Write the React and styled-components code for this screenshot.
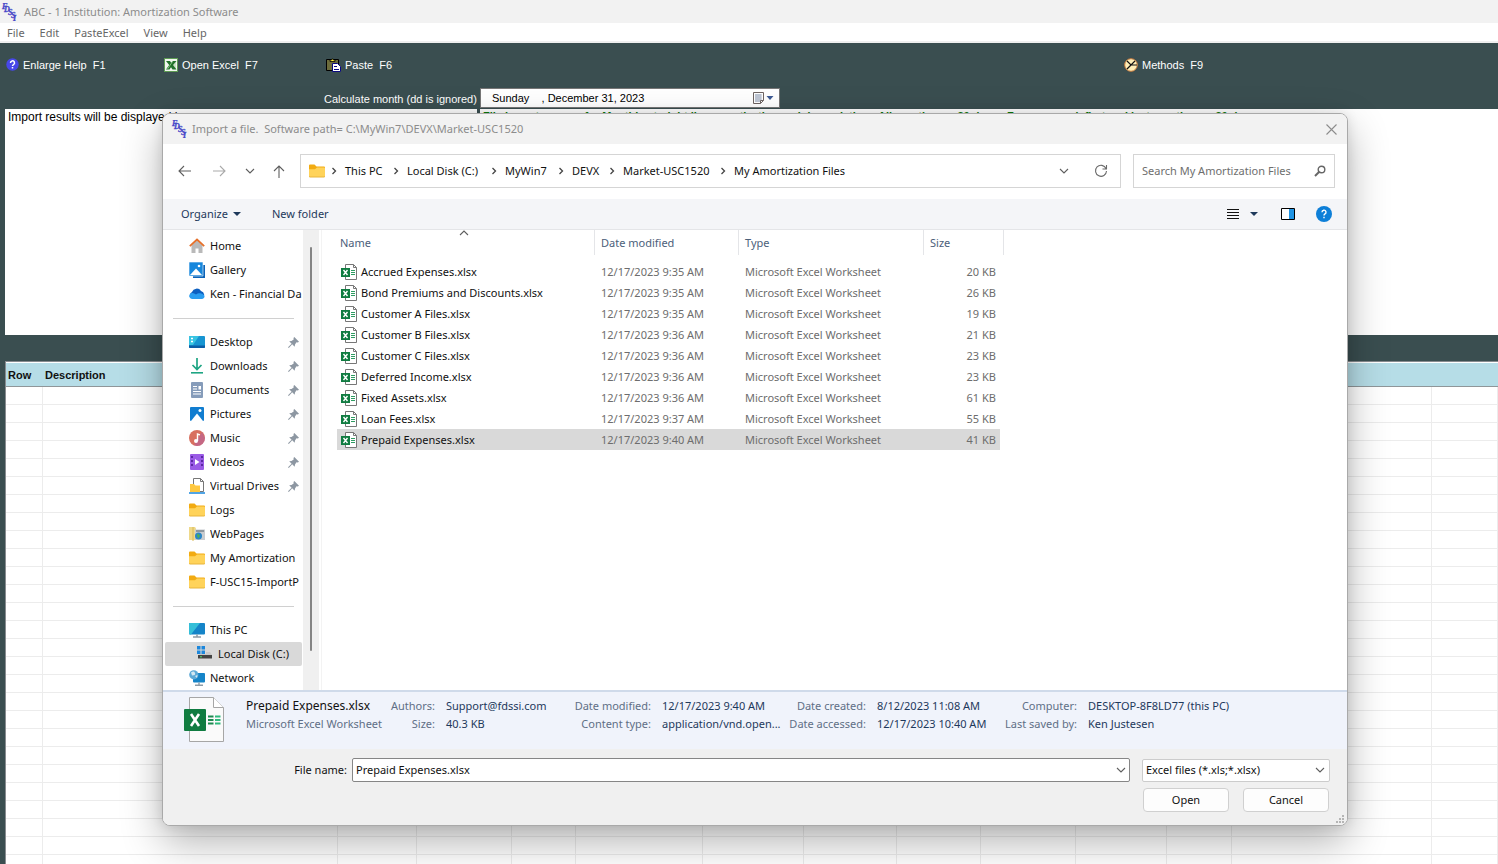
import React from "react";
import styled, { createGlobalStyle, css } from "styled-components";

const UI = `"Noto Sans", "Open Sans", sans-serif`;
const CLASSIC = `"Liberation Sans", Arial, sans-serif`;

const Global = createGlobalStyle`
  *, *::before, *::after { box-sizing: border-box; }
  body { margin: 0; background: #3a4e50; font: 11px/16px ${UI}; color: #111; }
  button, input, select { font: inherit; color: inherit; margin: 0; }
  button { padding: 0; border: 0; background: none; }
  svg { display: block; flex: none; }
  ul, dl, dd { margin: 0; padding: 0; list-style: none; }
`;

/* ---------- main window ---------- */
const Window = styled.main`
  position: relative;
  display: flex;
  flex-direction: column;
  height: 100vh;
  overflow: hidden;
`;
const TitleBar = styled.header`
  display: flex;
  align-items: center;
  gap: 7px;
  height: 23px;
  flex: none;
  padding-left: 1px;
  background: #f2f2f2;
  color: #8c8c8c;
`;
const MenuBar = styled.nav`
  display: flex;
  align-items: flex-end;
  gap: 15px;
  height: 20px;
  flex: none;
  padding-left: 7px;
  background: #fff;
  border-bottom: 2px solid #efefef;
  color: #666;
`;
const MenuItem = styled.button`
  height: 16px;
`;
const ToolBar = styled.div`
  display: grid;
  grid-template-columns: 158px 162px 798px 1fr;
  align-items: center;
  height: 43px;
  flex: none;
  padding-left: 6px;
  color: #fff;
  font: 11px/16px ${CLASSIC};
`;
const ToolButton = styled.button`
  display: flex;
  align-items: center;
  gap: 4px;
  white-space: pre;
`;
const DateRow = styled.div`
  display: flex;
  align-items: center;
  gap: 3px;
  height: 20px;
  flex: none;
  margin-top: 2px;
  padding-left: 324px;
  color: #fff;
  font: 11px/16px ${CLASSIC};
`;
const DateLabel = styled.label`
  width: 153px;
  padding-top: 2px;
  white-space: nowrap;
`;
const DatePicker = styled.div`
  display: flex;
  align-items: center;
  width: 300px;
  height: 20px;
  padding-right: 4px;
  background: #fff;
  border: 1px solid #777;
  color: #000;
`;
const DateInput = styled.input`
  flex: 1;
  min-width: 0;
  padding: 0 11px;
  border: 0;
  background: none;
  outline: 0;
`;
const Panels = styled.div`
  display: flex;
  gap: 3px;
  height: 226px;
  flex: none;
  margin-top: 1px;
  padding-left: 5px;
`;
const Panel = styled.p`
  width: ${(p) => (p.$wide ? "auto" : "472px")};
  flex: ${(p) => (p.$wide ? "1" : "none")};
  margin: 0;
  padding: 0 3px;
  background: #fff;
  color: ${(p) => (p.$wide ? "#0a7a0a" : "#000")};
  font: ${(p) => (p.$wide ? "bold 11px/14px" : "12px/16px")} ${CLASSIC};
  white-space: pre;
  overflow: hidden;
`;
const GridWrap = styled.section`
  flex: 1;
  min-height: 0;
  margin: 26px 0 0 5px;
  overflow: hidden;
  background: #fff;
  border-top: 1px solid #888c90;
  border-left: 1px solid #888c90;
`;
const Grid = styled.table`
  width: 100%;
  table-layout: fixed;
  border-spacing: 0;
  margin-top: 1px;
  font: bold 11px/16px ${CLASSIC};
  th {
    height: 24px;
    padding: 0 0 0 2px;
    text-align: left;
    background: #b6dde7;
    border-bottom: 1px solid #8f9699;
  }
  td {
    height: 18px;
    padding: 0;
    border-right: 1px solid #ececec;
    border-bottom: 1px solid #ececec;
  }
`;

/* ---------- dialog ---------- */
const Dialog = styled.section`
  position: absolute;
  top: 113px;
  left: 162px;
  right: 150px;
  display: flex;
  flex-direction: column;
  overflow: hidden;
  background: #fff;
  border: 1px solid #a9a9a9;
  border-radius: 8px;
  box-shadow: 0 16px 40px rgba(0, 0, 0, 0.3), 0 0 12px rgba(0, 0, 0, 0.1);
`;
const DialogTitle = styled.header`
  display: flex;
  align-items: center;
  gap: 5px;
  height: 30px;
  padding: 0 10px 0 8px;
  background: #f2f2f2;
  color: #8c8c8c;
  white-space: pre;
`;
const Spacer = styled.span`
  flex: 1;
`;
const NavBar = styled.div`
  display: flex;
  align-items: center;
  gap: 6px;
  height: 55px;
  padding: 0 12px 1px 9px;
`;
const IconButton = styled.button`
  display: flex;
  align-items: center;
  justify-content: center;
  width: ${(p) => p.$w || 24}px;
  height: 24px;
`;
const AddressBar = styled.div`
  display: flex;
  align-items: center;
  flex: 1;
  min-width: 0;
  height: 34px;
  margin-right: 6px;
  padding: 0 7px 0 8px;
  border: 1px solid #d5d5d5;
  white-space: nowrap;
`;
const Crumb = styled.button`
  width: ${(p) => p.$w}px;
  text-align: left;
  white-space: nowrap;
`;
const CrumbSep = styled.span`
  display: flex;
  justify-content: center;
  width: 20px;
  padding-right: 2px;
`;
const SearchBox = styled.label`
  display: flex;
  align-items: center;
  width: 202px;
  height: 34px;
  padding: 0 8px;
  border: 1px solid #d5d5d5;
`;
const SearchInput = styled.input`
  flex: 1;
  min-width: 0;
  padding: 0;
  border: 0;
  outline: 0;
  background: none;
  &::placeholder { color: #6e6e6e; opacity: 1; }
`;
const CommandBar = styled.div`
  display: flex;
  align-items: center;
  height: 31px;
  padding: 0 15px 0 18px;
  background: #f4f5f8;
  border-bottom: 1px solid #e4e5e8;
  color: #1e395b;
`;
const Command = styled.button`
  display: flex;
  align-items: center;
  gap: 5px;
  margin-right: ${(p) => p.$after || 0}px;
`;
const Browser = styled.div`
  display: flex;
  height: 460px;
`;
const Sidebar = styled.nav`
  display: flex;
  width: 159px;
  flex: none;
  border-right: 1px solid #f3f3f3;
`;
const Tree = styled.ul`
  width: 140px;
  padding: 4px 1px 0 2px;
`;
const TreeItem = styled.button`
  display: flex;
  align-items: center;
  gap: 5px;
  width: 100%;
  height: 24px;
  padding-left: ${(p) => (p.$nested ? 32 : 24)}px;
  border-radius: 2px;
  background: ${(p) => (p.$nested ? "#d9d9d9" : "transparent")};
  white-space: nowrap;
`;
const TreeText = styled.span`
  flex: 1;
  min-width: 0;
  overflow: hidden;
  text-align: left;
`;
const PinBox = styled.span`
  padding-right: 3px;
`;
const TreeGap = styled.li`
  height: 24px;
  margin: 0 8px;
  background: linear-gradient(#d0d0d0, #d0d0d0) 0 12px / 100% 1px no-repeat;
`;
const ScrollTrack = styled.div`
  width: 16px;
  padding: 17px 6px 39px 7px;
  background: #f0f0f0;
`;
const ScrollThumb = styled.div`
  height: 100%;
  width: 2px;
  border-radius: 1px;
  background: #858585;
`;
const FileTable = styled.table`
  align-self: flex-start;
  width: 667px;
  margin-left: 15px;
  table-layout: fixed;
  border-spacing: 0;
  th {
    position: relative;
    height: 25px;
    padding: 0 6px;
    border-right: 1px solid #e4e5e8;
    color: #4c607a;
    font-weight: 400;
    text-align: left;
  }
  th:first-child { padding-left: 3px; }
  thead::after { content: ""; display: block; height: 6px; }
`;
const SortMark = styled.span`
  position: absolute;
  top: 0;
  left: 122px;
`;
const FileRow = styled.tr`
  td {
    height: 21px;
    padding: 0 6px;
    color: #6d6d6d;
    white-space: nowrap;
    background: ${(p) => (p.$selected ? "#d9d9d9" : "transparent")};
  }
  td:first-child { padding-left: 4px; color: #111; }
  td:last-child {
    padding-right: 4px;
    border-right: 4px solid #fff;
    text-align: right;
  }
`;
const FileName = styled.span`
  display: flex;
  align-items: center;
  gap: 3px;
`;
const Details = styled.div`
  display: flex;
  height: 59px;
  padding: 5px 0 0 21px;
  background: #f0f3fb;
  border-top: 2px solid #cfdaea;
`;
const DetailGrid = styled.dl`
  display: grid;
  grid-template-columns: 140px 60px 116px 100px 127px 88px 120px 91px 1fr;
  grid-auto-rows: 18px;
  align-items: center;
  height: 36px;
  margin-left: 21px;
  white-space: nowrap;
`;
const Term = styled.dt`
  padding-right: 11px;
  color: #5f6f86;
  text-align: right;
`;
const Value = styled.dd`
  color: ${(p) => p.$tone || "#1e395b"};
  font-size: ${(p) => (p.$title ? 12 : 11)}px;
`;
const Footer = styled.form`
  display: grid;
  grid-template-columns: 184px 1fr 188px;
  align-items: center;
  gap: 6px 12px;
  height: 76px;
  padding: 9px 17px 13px 0;
  background: #f0f0f0;
`;
const fieldBox = css`
  display: flex;
  align-items: center;
  background: #fff;
`;
const FileLabel = styled.label`
  text-align: right;
`;
const FileCombo = styled.div`
  ${fieldBox}
  height: 24px;
  margin-left: -7px;
  border: 1px solid #868686;
  border-radius: 2px;
`;
const FileInput = styled.input`
  flex: 1;
  min-width: 0;
  padding: 0 3px;
  border: 0;
  outline: 0;
  background: none;
`;
const TypeCombo = styled.div`
  ${fieldBox}
  display: grid;
  height: 23px;
  border: 1px solid #ccc;
  border-radius: 2px;
  svg { grid-area: 1 / 1; justify-self: end; margin-right: 4px; pointer-events: none; }
`;
const TypeSelect = styled.select`
  grid-area: 1 / 1;
  height: 21px;
  padding: 0 3px;
  border: 0;
  background: none;
  appearance: none;
  outline: 0;
`;
const Actions = styled.div`
  grid-column: 1 / -1;
  display: flex;
  justify-content: flex-end;
  gap: 14px;
  padding-right: 1px;
`;
const ActionButton = styled.button`
  width: 86px;
  height: 24px;
  background: #fdfdfd;
  border: 1px solid #d0d0d0;
  border-radius: 4px;
`;
const Grip = styled.span`
  position: absolute;
  right: 3px;
  bottom: 2px;
`;

/* ---------- icons ---------- */
const LogoIcon = () => (
  <svg width="16" height="18" viewBox="0 0 16 18" fill="#4646c8" stroke="#4646c8" strokeWidth=".3" fontFamily="Liberation Serif, serif" fontSize="8" fontWeight="700" fontStyle="italic">
    <text x="1" y="6">F</text><text x="3" y="9">D</text><text x="7" y="12">S</text><text x="10" y="15">S</text><text x="12" y="18">I</text>
  </svg>
);
const HelpIcon = () => (
  <svg width="13" height="13" viewBox="0 0 13 13"><circle cx="6.5" cy="6.5" r="6.2" fill="#4747e8" /><path d="M4.500 5a2 2 0 1 1 3 1.600c-.7.4-1 .7-1 1.400M6.500 9v1.500" stroke="#fff" strokeWidth="1.5" fill="none" /></svg>
);
const OldExcelIcon = () => (
  <svg width="14" height="14" viewBox="0 0 14 14"><path d="M0 0h14v14H0z" fill="#5e9c54" /><path d="M1 1h12v12H1z" fill="#f1f7ee" /><path d="M9 4h3M9 6h3M9 8h3M9 10h3" stroke="#a7cda0" /><path d="M2 3h4l1.300 2L9 3h3.500L9 7l3.500 4.500H8.500L7 9.300 5.500 11.500H2L5.200 7z" fill="#22722b" /><path d="M8.500 3.500 3.500 11" stroke="#7fbf78" /></svg>
);
const PasteIcon = () => (
  <svg width="15" height="14" viewBox="0 0 15 14"><path d="M.5 1.500h12v11H.5z" fill="#6c6c3c" stroke="#000" /><path d="M4 3.500V2h1.500a1 1 0 0 1 2 0H9v1.500z" fill="#ffee38" stroke="#000" strokeWidth=".8" /><path d="M6.500 5.500h5l3 3v5h-8z" fill="#fff" stroke="#0a0a80" /><path d="M8 8.500h3M8 11.500h5" stroke="#0a0a80" /></svg>
);
const MethodsIcon = () => (
  <svg width="14" height="14" viewBox="0 0 14 14"><circle cx="7" cy="7" r="6.3" fill="#ffefb8" stroke="#c8793a" /><path d="M3 3 7 7l4-4M7 7h6M7 7l-4 4" stroke="#111" strokeWidth="1.2" fill="none" /></svg>
);
const CalendarIcon = () => (
  <svg width="22" height="12" viewBox="0 0 22 12"><path d="M.5.500h10v8l-3 3h-7z" fill="#fff" stroke="#6e6462" /><path d="M2 3h7M2 5h7M2 7h7M2 9h5M3 2v8M5 2v8M7 2v8" stroke="#9aa6bb" strokeWidth=".8" /><path d="M10.500 8.500h-3v3" fill="none" stroke="#6e6462" /><path d="M13.500 4h7L17 8z" fill="#3d5a94" /></svg>
);
const Stroke = ({ d, w = 12, h = 12, c = "#5f5f5f", sw = 1.1 }) => (
  <svg width={w} height={h} viewBox={`0 0 ${w} ${h}`} fill="none" stroke={c} strokeWidth={sw}><path d={d} /></svg>
);
const ChevDown = ({ c }) => <Stroke w={10} h={10} d="M1 3l4 4 4-4" c={c} />;
const ChevRight = () => <Stroke w={6} h={8} d="M1.500 1l3 3-3 3" c="#444" sw={1.3} />;
const Caret = () => (
  <svg width="8" height="4" viewBox="0 0 8 4"><path d="M0 0h8L4 4z" fill="#1e395b" /></svg>
);
const FolderIcon = () => (
  <svg width="16" height="14" viewBox="0 0 16 14"><path d="M0 12V1.500Q0 .5 1 .5h4.500L7.500 2.500H15q1 0 1 1V8H0z" fill="#f2ab12" /><path d="M0 5.200h6l2-1.700h7q1 0 1 1V12q0 1-1 1H1q-1 0-1-1z" fill="#ffd35a" /><path d="M0 12q0 1 1 1h14q1 0 1-1" fill="none" stroke="#e8b53c" /></svg>
);
const SearchIcon = () => (
  <svg width="12" height="12" viewBox="0 0 12 12" fill="none" stroke="#666"><circle cx="7.5" cy="4.5" r="3.3" strokeWidth="1.4" /><path d="M5 7 1 11" strokeWidth="1.9" /></svg>
);
const RefreshIcon = () => <Stroke w={14} h={14} d="M12 4.500A5.500 5.500 0 1 0 12.500 7M12.500 1v4h-4" c="#6a6a6a" />;
const ListIcon = () => <Stroke w={12} h={12} d="M0 1.500h12M0 4.500h12M0 7.500h12M0 10.500h12" c="#111" sw={1} />;
const PaneIcon = () => (
  <svg width="14" height="12" viewBox="0 0 14 12"><path d="M.5.500h13v11H.5z" fill="#fff" stroke="#000" /><path d="M8 1h5v10H8z" fill="#1f94e4" /></svg>
);
const BlueHelpIcon = () => (
  <svg width="16" height="16" viewBox="0 0 16 16"><circle cx="8" cy="8" r="8" fill="#0d7fd8" /><path d="M6 6.200a2 2 0 1 1 3 1.700c-.7.500-1 .8-1 1.600M8 10.800v1.400" stroke="#fff" strokeWidth="1.4" fill="none" /></svg>
);
const FileIcon = () => (
  <svg width="17" height="16" viewBox="0 0 17 16"><path d="M4.500.5h8l3 3v12h-11z" fill="#fff" stroke="#777" /><path d="M12.500.5v3h3" fill="none" stroke="#777" /><path d="M10 6.500h4M10 8.500h4M10 10.500h4" stroke="#2f9c62" /><path d="M0 4h9v9H0z" fill="#107c41" /><path d="M2.500 6 6.500 11M6.500 6l-4 5" stroke="#fff" strokeWidth="1.4" /></svg>
);
const BigFileIcon = () => (
  <svg width="41" height="46" viewBox="0 0 41 46"><path d="M5.500.5h24l10 10v34h-34z" fill="#fafafa" stroke="#a6a6a6" /><path d="M29.500.5v10h10" fill="#fff" stroke="#a6a6a6" /><path d="M24 19.500h5.500M24 23h5.500M24 26.500h5.500" stroke="#1d8a50" strokeWidth="2" /><path d="M31 19.500h5.500M31 23h5.500M31 26.500h5.500" stroke="#2fb97c" strokeWidth="2" /><path d="M1 12h20q1 0 1 1v20q0 1-1 1H1q-1 0-1-1V13q0-1 1-1z" fill="#107c41" /><path d="M7 17l8 12M15 17 7 29" stroke="#fff" strokeWidth="2.6" /></svg>
);
const PinIcon = () => (
  <svg width="11" height="11" viewBox="0 0 11 11"><path d="M6.300 0 11 4.700l-1.200.8-1.300-.2L7 7.500l-.3 2.200L4.200 7.300.8 11 0 10.200l3.600-3.500L1.200 4.300 3.500 4 5.700 2.500 5.500 1z" fill="#8d97a2" /></svg>
);
const side = {
  home: <><path d="M2.500 7.500 8 2.500l5.500 5V15h-4v-4.500h-3V15h-4z" fill="#b9b9b9" /><path d="M.8 8.200 8 1.500l7.200 6.700" stroke="#e5702a" strokeWidth="1.8" fill="none" /></>,
  gallery: <><path d="M4 3h12v13H4z" fill="#0b63b8" /><path d="M0 0h14v14H0z" fill="#1787dc" stroke="#fff" strokeWidth=".6" /><path d="M1 13 7 6.500 13 13z" fill="#fff" /><circle cx="10" cy="4" r="1.3" fill="#fff" /></>,
  cloud: <><path d="M3.500 12.500A3.500 3.500 0 0 1 3 6a5 5 0 0 1 9-1 4 4 0 0 1 1 7.500z" fill="#0c5fc0" /><path d="M3.500 13a3 3 0 0 1-2.500-5c2-2 4-1 6 .5 2-1.500 5-2 8 .5a2.500 2.500 0 0 1-2 4z" fill="#2a9df0" /></>,
  desktop: <><rect y="2" width="16" height="12" rx="1" fill="#1795d2" /><path d="M0 3q0-1 1-1h9L4 11H0z" fill="#38c4e2" /><path d="M2 4.500h2M2 7.500h2" stroke="#fff" strokeWidth="1.5" /><path d="M0 11.500h16V13q0 1-1 1H1q-1 0-1-1z" fill="#0b5da6" /></>,
  download: <><path d="M8 0v11M3.500 7 8 11.500 12.500 7" stroke="#1ea583" strokeWidth="1.7" fill="none" /><path d="M2 14.800h12" stroke="#1ea583" strokeWidth="1.6" /></>,
  doc: <><rect x="2" y="0" width="12" height="16" rx="1" fill="#869cba" /><path d="M4 4.500h4M4 7h4M4 9.500h8M4 12h8" stroke="#fff" strokeWidth="1.2" /><path d="M9.500 4h2.500v3.500H9.500z" fill="#fff" /></>,
  picture: <><rect x="1" y="1" width="14" height="14" rx="1" fill="#117dd0" /><path d="M2 15 8 7.500 14 15z" fill="#fff" /><circle cx="11" cy="4.5" r="1.5" fill="#fff" /></>,
  music: <><circle cx="8" cy="8" r="8" fill="#d8705f" /><path d="M8 16a8 8 0 0 0 8-8L13 2 5 15z" fill="#b7619c" opacity=".6" /><path d="M8.500 11V4l2.500.8" stroke="#fff" strokeWidth="1.4" fill="none" /><circle cx="7" cy="11" r="2" fill="#fff" /></>,
  video: <><rect x="1" y="0" width="14" height="16" rx="1" fill="#9a5be6" /><path d="M3 2v12M13 2v12" stroke="#4d1c93" strokeWidth="1.6" strokeDasharray="2 2" /><path d="M6 5v6l4.500-3z" fill="#fff" /></>,
  virtual: <><path d="M4.500.5h7l3 3v10h-10z" fill="#fff" stroke="#777" /><path d="M11.500.5v3h3" fill="none" stroke="#777" /><path d="M1 6h4l1.500 1.500H11V14H1z" fill="#ffc83f" /><path d="M0 15h16" stroke="#1787dc" strokeWidth="1.5" /></>,
  web: <><path d="M0 1h6l1 1.500V14H0z" fill="#efd98a" /><path d="M4 1v14" stroke="#d9b957" /><path d="M6 3.500h10V14H6z" fill="#c9ccd0" /><path d="M7 4h8v2H7z" fill="#8e979f" /><circle cx="9.500" cy="10" r="3.5" fill="#2b86c6" /><path d="M8.500 7.500l2.500 2-1.500 3L8 10z" fill="#4fb053" /></>,
  pc: <><rect y="1" width="16" height="11.5" rx="1" fill="#1584c8" /><path d="M0 2q0-1 1-1h10L2 12.500H1q-1 0-1-1z" fill="#35bfd8" /><path d="M8 12.500V15M4 15h8" stroke="#8d9ba6" strokeWidth="1.5" /></>,
  disk: <><path d="M0 0h3.500v3.500H0zM4.500 0H8v3.500H4.500zM0 4.500h3.500V8H0zM4.500 4.500H8V8H4.500z" fill="#1c87dc" /><path d="M9 6h4l2 3H2l1-1h6z" fill="#c8c8c8" /><path d="M1 9h14v3.500H1z" fill="#444" /><path d="M3 10.800h2" stroke="#4fe06b" /></>,
  network: <><rect x="4" y="3" width="12" height="9.5" rx="1" fill="#1584c8" /><path d="M10 12.500V15M6 15.300h8" stroke="#8d9ba6" strokeWidth="1.4" /><circle cx="4.8" cy="4.8" r="4.6" fill="#5da9d6" /><path d="M2 2.500q3-2 4 .5t-3 2.500zM6 6l2.500-1-.5 3z" fill="#d3e8f2" /></>,
};
const SideIcon = ({ name }) =>
  name === "folder" ? <FolderIcon /> : <svg width="16" height="16" viewBox="0 0 16 16">{side[name]}</svg>;

/* ---------- data ---------- */
const tree = [
  ["home", "Home"], ["gallery", "Gallery"], ["cloud", "Ken - Financial Da"], null,
  ["desktop", "Desktop", 1], ["download", "Downloads", 1], ["doc", "Documents", 1], ["picture", "Pictures", 1],
  ["music", "Music", 1], ["video", "Videos", 1], ["virtual", "Virtual Drives", 1], ["folder", "Logs"],
  ["web", "WebPages"], ["folder", "My Amortization"], ["folder", "F-USC15-ImportP"], null,
  ["pc", "This PC"], ["disk", "Local Disk (C:)"], ["network", "Network"],
];
const files = [
  ["Accrued Expenses.xlsx", "9:35", 20], ["Bond Premiums and Discounts.xlsx", "9:35", 26],
  ["Customer A Files.xlsx", "9:35", 19], ["Customer B Files.xlsx", "9:36", 21],
  ["Customer C Files.xlsx", "9:36", 23], ["Deferred Income.xlsx", "9:36", 23],
  ["Fixed Assets.xlsx", "9:36", 61], ["Loan Fees.xlsx", "9:37", 55], ["Prepaid Expenses.xlsx", "9:40", 41],
];
const crumbs = [["This PC", 42], ["Local Disk (C:)", 78], ["MyWin7", 47], ["DEVX", 31], ["Market-USC1520", 91], ["My Amortization Files", 120]];
const gridColumns = [37, 295, 79, 95, 64, 127, 101, 93, 84, 95, 91, 65, 200];

export default function App() {
  return (
    <Window>
      <Global />
      <TitleBar><LogoIcon />ABC - 1 Institution: Amortization Software</TitleBar>
      <MenuBar>
        {["File", "Edit", "PasteExcel", "View", "Help"].map((m) => <MenuItem key={m}>{m}</MenuItem>)}
      </MenuBar>
      <ToolBar>
        <ToolButton><HelpIcon />{"Enlarge Help  F1"}</ToolButton>
        <ToolButton><OldExcelIcon />{"Open Excel  F7"}</ToolButton>
        <ToolButton><PasteIcon />{"Paste  F6"}</ToolButton>
        <ToolButton><MethodsIcon />{"Methods  F9"}</ToolButton>
      </ToolBar>
      <DateRow>
        <DateLabel htmlFor="calc-month">Calculate month (dd is ignored)</DateLabel>
        <DatePicker>
          <DateInput id="calc-month" defaultValue="Sunday    , December 31, 2023" />
          <button aria-label="Pick a date"><CalendarIcon /></button>
        </DatePicker>
      </DateRow>
      <Panels>
        <Panel>Import results will be displayed here</Panel>
        <Panel $wide>{"File import menu -  for Monthly straight line amortization and depreciation.  All months are 30 days.  For expensed, first and last months are 30 days."}</Panel>
      </Panels>
      <GridWrap>
        <Grid>
          <colgroup>{gridColumns.map((w, i) => <col key={i} width={w} />)}<col /></colgroup>
          <thead><tr><th>Row</th><th>Description</th><th colSpan={12} /></tr></thead>
          <tbody>
            {Array.from({ length: 30 }, (_, r) => (
              <tr key={r}>{Array.from({ length: 14 }, (_, c) => <td key={c} />)}</tr>
            ))}
          </tbody>
        </Grid>
      </GridWrap>

      <Dialog role="dialog" aria-label="Import a file">
        <DialogTitle>
          <LogoIcon />{"Import a file.  Software path= C:\\MyWin7\\DEVX\\Market-USC1520"}
          <Spacer />
          <IconButton aria-label="Close" $w={11}><Stroke w={11} h={11} d="M.5.500l10 10M10.500.500l-10 10" c="#8c8c8c" /></IconButton>
        </DialogTitle>
        <NavBar>
          <IconButton aria-label="Back"><Stroke w={13} h={12} d="M13 6H1M6 1 1 6l5 5" /></IconButton>
          <IconButton aria-label="Forward" $w={34}><Stroke w={13} h={12} d="M0 6h12M7 1l5 5-5 5" c="#aaa" /></IconButton>
          <IconButton aria-label="Recent" $w={16}><ChevDown /></IconButton>
          <IconButton aria-label="Up" $w={30}><Stroke w={12} h={13} d="M6 13V1M1 6l5-5 5 5" /></IconButton>
          <AddressBar>
            <FolderIcon />
            {crumbs.map(([c, w]) => (
              <React.Fragment key={c}><CrumbSep><ChevRight /></CrumbSep><Crumb $w={w}>{c}</Crumb></React.Fragment>
            ))}
            <Spacer />
            <IconButton aria-label="History" $w={50}><ChevDown /></IconButton>
            <IconButton aria-label="Refresh"><RefreshIcon /></IconButton>
          </AddressBar>
          <SearchBox>
            <SearchInput aria-label="Search" placeholder="Search My Amortization Files" />
            <SearchIcon />
          </SearchBox>
        </NavBar>
        <CommandBar>
          <Command $after={31}>Organize <Caret /></Command>
          <Command>New folder</Command>
          <Spacer />
          <Command aria-label="View" $after={11}><ListIcon /></Command>
          <Command aria-label="More views" $after={23}><Caret /></Command>
          <Command aria-label="Preview pane" $after={21}><PaneIcon /></Command>
          <Command aria-label="Help"><BlueHelpIcon /></Command>
        </CommandBar>
        <Browser>
          <Sidebar>
            <Tree>
              {tree.map((t, i) => t ? (
                <li key={i}>
                  <TreeItem $nested={t[0] === "disk"}>
                    <SideIcon name={t[0]} /><TreeText>{t[1]}</TreeText>
                    {t[2] && <PinBox><PinIcon /></PinBox>}
                  </TreeItem>
                </li>
              ) : <TreeGap key={i} />)}
            </Tree>
            <ScrollTrack><ScrollThumb /></ScrollTrack>
          </Sidebar>
          <FileTable>
            <colgroup><col width="258" /><col width="144" /><col width="185" /><col width="80" /></colgroup>
            <thead>
              <tr>
                <th>Name<SortMark><Stroke w={10} h={6} d="M1 5l4-4 4 4" /></SortMark></th>
                <th>Date modified</th><th>Type</th><th>Size</th>
              </tr>
            </thead>
            <tbody>
              {files.map(([n, t, s], i) => (
                <FileRow key={n} $selected={i === 8}>
                  <td><FileName><FileIcon />{n}</FileName></td>
                  <td>12/17/2023 {t} AM</td><td>Microsoft Excel Worksheet</td><td>{s} KB</td>
                </FileRow>
              ))}
            </tbody>
          </FileTable>
        </Browser>
        <Details>
          <BigFileIcon />
          <DetailGrid>
            <Value $title $tone="#111">Prepaid Expenses.xlsx</Value>
            <Term>Authors:</Term><Value>Support@fdssi.com</Value>
            <Term>Date modified:</Term><Value>12/17/2023 9:40 AM</Value>
            <Term>Date created:</Term><Value>8/12/2023 11:08 AM</Value>
            <Term>Computer:</Term><Value>DESKTOP-8F8LD77 (this PC)</Value>
            <Value $tone="#5f6f86">Microsoft Excel Worksheet</Value>
            <Term>Size:</Term><Value>40.3 KB</Value>
            <Term>Content type:</Term><Value>application/vnd.open...</Value>
            <Term>Date accessed:</Term><Value>12/17/2023 10:40 AM</Value>
            <Term>Last saved by:</Term><Value>Ken Justesen</Value>
          </DetailGrid>
        </Details>
        <Footer onSubmit={(e) => e.preventDefault()}>
          <FileLabel htmlFor="file-name">File name:</FileLabel>
          <FileCombo>
            <FileInput id="file-name" defaultValue="Prepaid Expenses.xlsx" />
            <IconButton type="button" aria-label="Show names" $w={16}><ChevDown /></IconButton>
          </FileCombo>
          <TypeCombo>
            <TypeSelect aria-label="File type"><option>Excel files (*.xls;*.xlsx)</option></TypeSelect>
            <ChevDown />
          </TypeCombo>
          <Actions><ActionButton>Open</ActionButton><ActionButton type="button">Cancel</ActionButton></Actions>
        </Footer>
        <Grip><svg width="8" height="8" viewBox="0 0 8 8" fill="#b5b5b5"><path d="M6 0h2v2H6zM3 3h2v2H3zM6 3h2v2H6zM0 6h2v2H0zM3 6h2v2H3zM6 6h2v2H6z" /></svg></Grip>
      </Dialog>
    </Window>
  );
}
